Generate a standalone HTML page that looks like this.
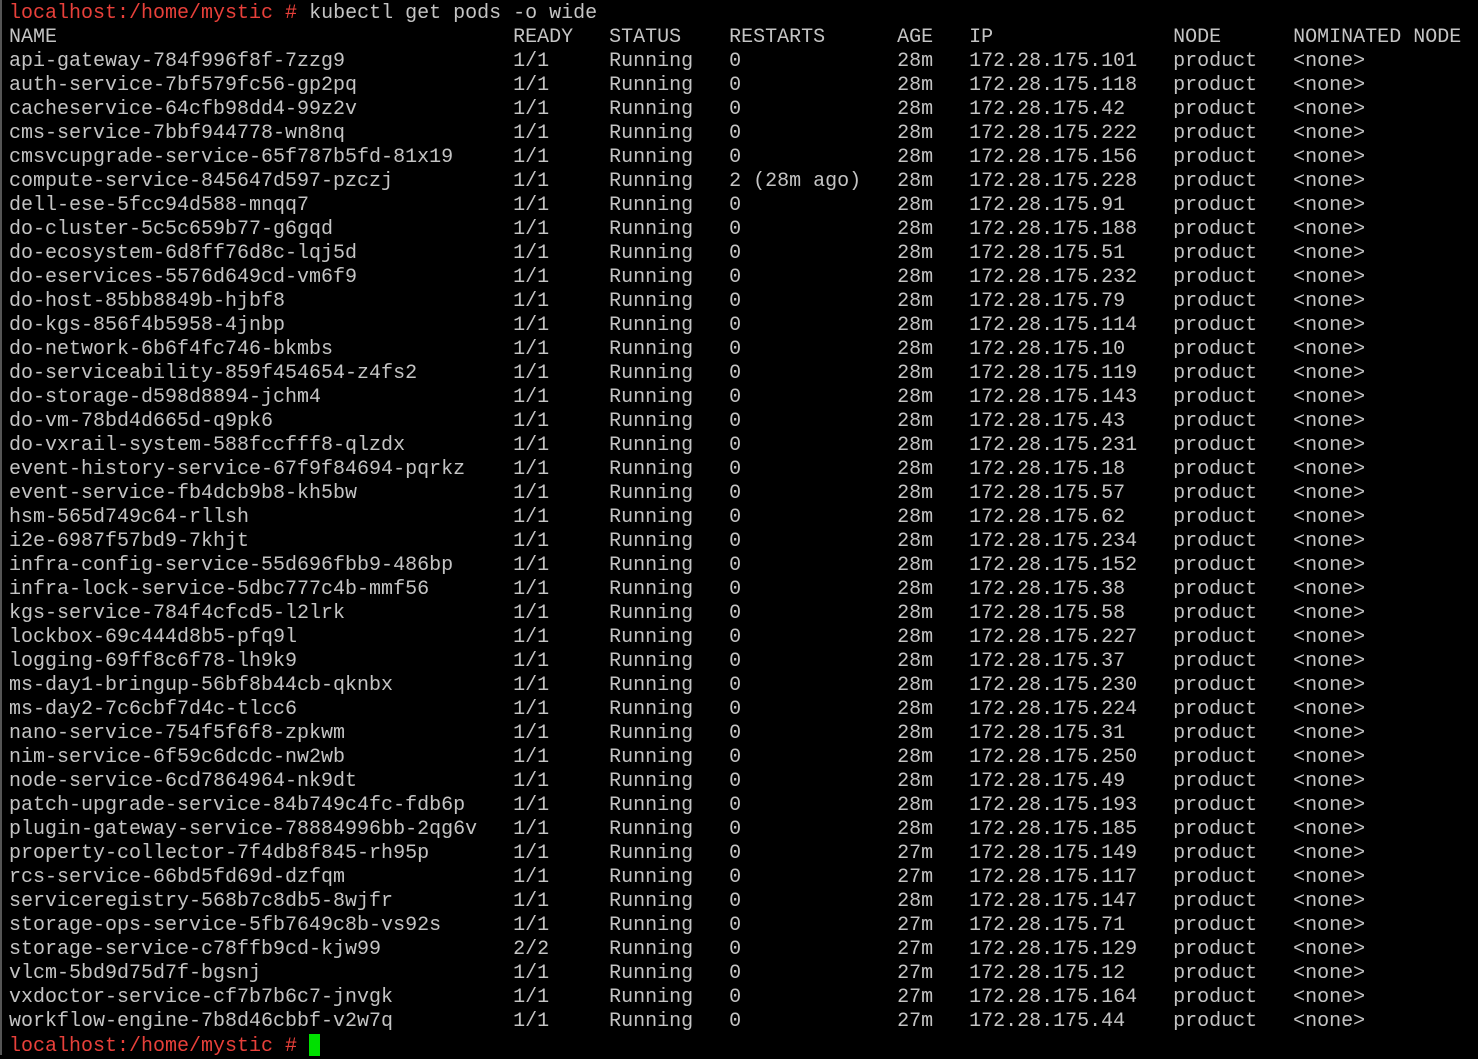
<!DOCTYPE html>
<html><head><meta charset="utf-8"><style>
html,body{margin:0;padding:0;background:#000;width:1478px;height:1055px;overflow:hidden}
#t{position:absolute;left:9px;top:2px;font-family:"Liberation Mono","Courier New",monospace;font-size:20px;line-height:24px;color:#c4c4c4;white-space:nowrap}
.r{height:24px;white-space:pre}
.r span{display:inline-block;white-space:pre}
.a{width:42ch}.b{width:8ch}.c{width:10ch}.d{width:14ch}.e{width:6ch}.f{width:17ch}.g{width:10ch}
.red{color:#e8403a}
.cur{display:inline-block;width:11px;height:22px;background:#00e000;vertical-align:-5px}
#bar{position:absolute;left:0;top:0;width:2px;height:1055px;background:#555}
</style></head><body><div id="bar"></div><div id="t"><div class="r"><span class="red">localhost:/home/mystic # </span>kubectl get pods -o wide</div><div class="r"><span class="a">NAME</span><span class="b">READY</span><span class="c">STATUS</span><span class="d">RESTARTS</span><span class="e">AGE</span><span class="f">IP</span><span class="g">NODE</span>NOMINATED NODE</div><div id="rows"></div><div class="r"><span class="red">localhost:/home/mystic # </span><span class="cur"></span></div></div>
<script>
var d=[
["api-gateway-784f996f8f-7zzg9","1/1","0","28m","101"],
["auth-service-7bf579fc56-gp2pq","1/1","0","28m","118"],
["cacheservice-64cfb98dd4-99z2v","1/1","0","28m","42"],
["cms-service-7bbf944778-wn8nq","1/1","0","28m","222"],
["cmsvcupgrade-service-65f787b5fd-81x19","1/1","0","28m","156"],
["compute-service-845647d597-pzczj","1/1","2 (28m ago)","28m","228"],
["dell-ese-5fcc94d588-mnqq7","1/1","0","28m","91"],
["do-cluster-5c5c659b77-g6gqd","1/1","0","28m","188"],
["do-ecosystem-6d8ff76d8c-lqj5d","1/1","0","28m","51"],
["do-eservices-5576d649cd-vm6f9","1/1","0","28m","232"],
["do-host-85bb8849b-hjbf8","1/1","0","28m","79"],
["do-kgs-856f4b5958-4jnbp","1/1","0","28m","114"],
["do-network-6b6f4fc746-bkmbs","1/1","0","28m","10"],
["do-serviceability-859f454654-z4fs2","1/1","0","28m","119"],
["do-storage-d598d8894-jchm4","1/1","0","28m","143"],
["do-vm-78bd4d665d-q9pk6","1/1","0","28m","43"],
["do-vxrail-system-588fccfff8-qlzdx","1/1","0","28m","231"],
["event-history-service-67f9f84694-pqrkz","1/1","0","28m","18"],
["event-service-fb4dcb9b8-kh5bw","1/1","0","28m","57"],
["hsm-565d749c64-rllsh","1/1","0","28m","62"],
["i2e-6987f57bd9-7khjt","1/1","0","28m","234"],
["infra-config-service-55d696fbb9-486bp","1/1","0","28m","152"],
["infra-lock-service-5dbc777c4b-mmf56","1/1","0","28m","38"],
["kgs-service-784f4cfcd5-l2lrk","1/1","0","28m","58"],
["lockbox-69c444d8b5-pfq9l","1/1","0","28m","227"],
["logging-69ff8c6f78-lh9k9","1/1","0","28m","37"],
["ms-day1-bringup-56bf8b44cb-qknbx","1/1","0","28m","230"],
["ms-day2-7c6cbf7d4c-tlcc6","1/1","0","28m","224"],
["nano-service-754f5f6f8-zpkwm","1/1","0","28m","31"],
["nim-service-6f59c6dcdc-nw2wb","1/1","0","28m","250"],
["node-service-6cd7864964-nk9dt","1/1","0","28m","49"],
["patch-upgrade-service-84b749c4fc-fdb6p","1/1","0","28m","193"],
["plugin-gateway-service-78884996bb-2qg6v","1/1","0","28m","185"],
["property-collector-7f4db8f845-rh95p","1/1","0","27m","149"],
["rcs-service-66bd5fd69d-dzfqm","1/1","0","27m","117"],
["serviceregistry-568b7c8db5-8wjfr","1/1","0","28m","147"],
["storage-ops-service-5fb7649c8b-vs92s","1/1","0","27m","71"],
["storage-service-c78ffb9cd-kjw99","2/2","0","27m","129"],
["vlcm-5bd9d75d7f-bgsnj","1/1","0","27m","12"],
["vxdoctor-service-cf7b7b6c7-jnvgk","1/1","0","27m","164"],
["workflow-engine-7b8d46cbbf-v2w7q","1/1","0","27m","44"]];
var h="";d.forEach(function(r){h+='<div class="r"><span class="a">'+r[0]+'</span><span class="b">'+r[1]+'</span><span class="c">Running</span><span class="d">'+r[2]+'</span><span class="e">'+r[3]+'</span><span class="f">172.28.175.'+r[4]+'</span><span class="g">product</span>&lt;none&gt;</div>';});
document.getElementById("rows").outerHTML=h;
</script>
</body></html>
